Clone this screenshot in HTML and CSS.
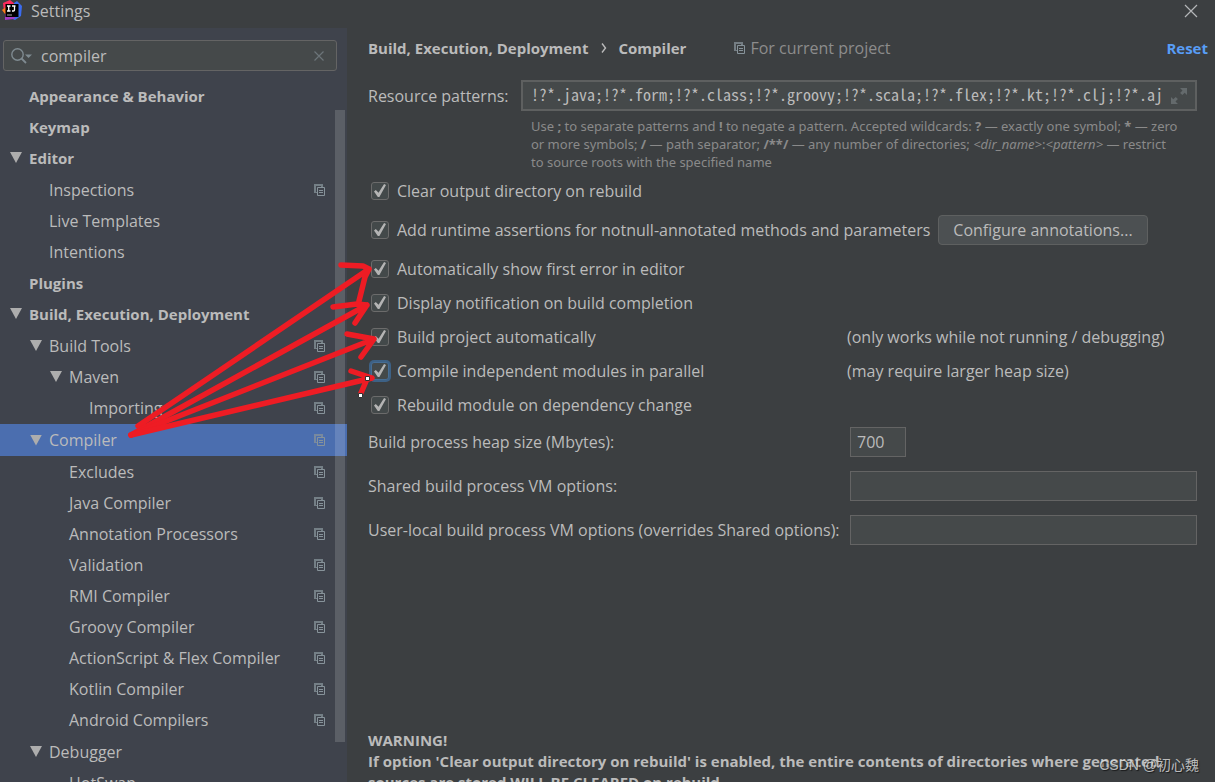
FILE: index.html
```
<!DOCTYPE html>
<html lang="en">
<head>
<meta charset="utf-8">
<title>Settings</title>
<link rel="stylesheet" href="styles.css">
</head>
<body>
<svg class="defs" aria-hidden="true">
  <symbol id="copy" viewBox="0 0 12 12">
    <path d="M0 0h9v3H7V2H2v6h1v1H0z" fill="currentColor" opacity=".75"/>
    <path d="M3.500 3.500h7v8h-7z" fill="none" stroke="currentColor"/>
    <path d="M5 6.500h4M5 8.500h4" stroke="currentColor"/>
  </symbol>
</svg>
<div class="window">
  <header class="titlebar">
    <svg class="logo" viewBox="0 0 20 20" aria-hidden="true">
      <path d="M1 3 8 0l5 4-3 9-8-1z" fill="#fc2a5c"/>
      <path d="M0 10l4-3 3 8-4-1z" fill="#f97a1c"/>
      <path d="M12 3 15 1l5 5-1 10-6 4-5-2z" fill="#3b6cf0"/>
      <path d="M3 14l6-3 5 5-2 3-9 1z" fill="#a33bc4"/>
      <path d="M3.500 4h13v13h-13z" fill="#000"/>
      <path d="M5 6h3.500M6.700 6v5M5 11h3.500M10 6h3.500M12.500 6v4q0 1-1.200 1H10" fill="none" stroke="#fff" stroke-width="1.300"/>
      <path d="M5 15h5" stroke="#aaa"/>
    </svg>
    <h1 class="title">Settings</h1>
    <button class="close" aria-label="Close"><svg width="14" height="14" viewBox="0 0 14 14"><path d="M1 1l12 12M13 1 1 13" stroke="#b4b6b8" stroke-width="1.200"/></svg></button>
  </header>
  <div class="body">
    <aside class="sidebar">
      <div class="search">
        <svg width="21" height="16" viewBox="0 0 21 16" aria-hidden="true"><circle cx="6.500" cy="6.500" r="5.700" fill="none" stroke="#7f8b91" stroke-width="1.400"/><path d="M10.500 10.500l4.500 4.500" stroke="#7f8b91" stroke-width="1.800"/><path d="M14 6.500h7l-3.500 3.500z" fill="#7f8b91"/></svg>
        <input class="search-input" type="text" value="compiler" aria-label="Search settings">
        <button class="clear" aria-label="Clear"><svg width="10" height="10" viewBox="0 0 10 10"><path d="M.5.5l9 9M9.500.5l-9 9" stroke="#6c7479" stroke-width="1.200"/></svg></button>
      </div>
      <nav class="tree">
        <ul>
          <li><a class="row top" href="#">Appearance &amp; Behavior</a></li>
          <li><a class="row top" href="#">Keymap</a></li>
          <li><a class="row top open" href="#">Editor</a>
            <ul class="group">
              <li><a class="row l2" href="#">Inspections<svg class="copy"><use href="#copy"/></svg></a></li>
              <li><a class="row l2" href="#">Live Templates</a></li>
              <li><a class="row l2" href="#">Intentions</a></li>
            </ul>
          </li>
          <li><a class="row top" href="#">Plugins</a></li>
          <li><a class="row top open" href="#">Build, Execution, Deployment</a>
            <ul class="group">
              <li><a class="row l2 open" href="#">Build Tools<svg class="copy"><use href="#copy"/></svg></a>
                <ul class="subgroup">
                  <li><a class="row l3 open" href="#">Maven<svg class="copy"><use href="#copy"/></svg></a>
                    <ul>
                      <li><a class="row l4" href="#">Importing<svg class="copy"><use href="#copy"/></svg></a></li>
                    </ul>
                  </li>
                </ul>
              </li>
              <li><a class="row l2 open selected" href="#" aria-current="page">Compiler<svg class="copy"><use href="#copy"/></svg></a>
                <ul class="subgroup">
                  <li><a class="row l3" href="#">Excludes<svg class="copy"><use href="#copy"/></svg></a></li>
                  <li><a class="row l3" href="#">Java Compiler<svg class="copy"><use href="#copy"/></svg></a></li>
                  <li><a class="row l3" href="#">Annotation Processors<svg class="copy"><use href="#copy"/></svg></a></li>
                  <li><a class="row l3" href="#">Validation<svg class="copy"><use href="#copy"/></svg></a></li>
                  <li><a class="row l3" href="#">RMI Compiler<svg class="copy"><use href="#copy"/></svg></a></li>
                  <li><a class="row l3" href="#">Groovy Compiler<svg class="copy"><use href="#copy"/></svg></a></li>
                  <li><a class="row l3" href="#">ActionScript &amp; Flex Compiler<svg class="copy"><use href="#copy"/></svg></a></li>
                  <li><a class="row l3" href="#">Kotlin Compiler<svg class="copy"><use href="#copy"/></svg></a></li>
                  <li><a class="row l3" href="#">Android Compilers<svg class="copy"><use href="#copy"/></svg></a></li>
                </ul>
              </li>
              <li><a class="row l2 open" href="#">Debugger</a>
                <ul>
                  <li><a class="row l3" href="#">HotSwap</a></li>
                </ul>
              </li>
            </ul>
          </li>
        </ul>
        <div class="scrollbar"></div>
      </nav>
    </aside>
    <main class="content">
      <div class="crumbs">
        <h2 class="crumb">Build, Execution, Deployment</h2>
        <svg class="chevron" width="6" height="10" viewBox="0 0 6 10" aria-hidden="true"><path d="M1 .5 4.500 5 1 9.500" fill="none" stroke="#bbb" stroke-width="1.400"/></svg>
        <h2 class="crumb">Compiler</h2>
        <span class="scope"><svg class="copy"><use href="#copy"/></svg>For current project</span>
        <a class="reset" href="#">Reset</a>
      </div>
      <div class="patterns">
        <label for="patterns">Resource patterns:</label>
        <div class="pattern-box">
          <input id="patterns" type="text" value="!?*.java;!?*.form;!?*.class;!?*.groovy;!?*.scala;!?*.flex;!?*.kt;!?*.clj;!?*.aj">
          <button class="expand" aria-label="Expand"><svg width="16" height="16" viewBox="0 0 16 16"><path d="M9 0h7v7l-2.300-2.300-2.400 2.400-2.200-2.200 2.400-2.400zM0 9l2.300 2.300 2.400-2.400 2.200 2.200-2.400 2.400L7 16H0z" fill="#646a6c"/></svg></button>
        </div>
        <p class="hint">Use <b>;</b> to separate patterns and <b>!</b> to negate a pattern. Accepted wildcards: <b>?</b> — exactly one symbol; <b>*</b> — zero<br>or more symbols; <b>/</b> — path separator; <b>/**/</b> — any number of directories; <i>&lt;dir_name&gt;</i>:<i>&lt;pattern&gt;</i> — restrict<br>to source roots with the specified name</p>
      </div>
      <div class="check"><label><input type="checkbox" checked>Clear output directory on rebuild</label></div>
      <div class="check tall"><label><input type="checkbox" checked>Add runtime assertions for notnull-annotated methods and parameters</label><button class="configure">Configure annotations...</button></div>
      <div class="check"><label><input type="checkbox" checked>Automatically show first error in editor</label></div>
      <div class="check"><label><input type="checkbox" checked>Display notification on build completion</label></div>
      <div class="check noted"><label><input type="checkbox" checked>Build project automatically</label><span>(only works while not running / debugging)</span></div>
      <div class="check noted"><label><input class="focused" type="checkbox" checked>Compile independent modules in parallel</label><span>(may require larger heap size)</span></div>
      <div class="check"><label><input type="checkbox" checked>Rebuild module on dependency change</label></div>
      <div class="fields">
        <label for="heap">Build process heap size (Mbytes):</label><input class="heap" id="heap" type="text" value="700">
        <label for="shared">Shared build process VM options:</label><input id="shared" type="text">
        <label for="local">User-local build process VM options (overrides Shared options):</label><input id="local" type="text">
      </div>
      <p class="warning">WARNING!<br>If option 'Clear output directory on rebuild' is enabled, the entire contents of directories where generated<br>sources are stored WILL BE CLEARED on rebuild.</p>
    </main>
  </div>
  <svg class="arrows" width="420" height="460" viewBox="0 0 420 460" aria-hidden="true">
    <g fill="none" stroke="#ee1c24" stroke-width="5.500" stroke-linecap="round" stroke-linejoin="round">
      <path d="M138 426 369 269M341 265l22 1 6 3-4 8-6 24"/>
      <path d="M131 435 367 305M333 307l24-3 10 1-12 18"/>
      <path d="M131 435 374 339M347 334l27 5-13 18"/>
      <path d="M131 435 372 378M351 371l21 7M367 379l-6 14"/>
    </g>
    <path d="M365.500 376.500h4v4h-4zM358.500 393.500h4v4h-4z" fill="#fff" stroke="#333"/>
  </svg>
  <div class="watermark">CSDN @初心魏</div>
</div>
</body>
</html>
```
FILE: styles.css
```
* { box-sizing: border-box; }
body {
  margin: 0;
  background: #3c3f41;
  color: #bbbbbb;
  font: 16px/22px "Open Sans", "Noto Sans", sans-serif;
}
h1, h2, p, ul { margin: 0; padding: 0; }
ul { list-style: none; }
a { color: inherit; text-decoration: none; }
button { padding: 0; border: 0; background: none; color: inherit; font: inherit; display: flex; align-items: center; justify-content: center; }
input { margin: 0; font: inherit; color: inherit; }
.defs { position: absolute; width: 0; height: 0; }
.window { position: relative; height: 100vh; overflow: hidden; display: flex; flex-direction: column; }
.titlebar { flex: none; height: 28px; display: flex; align-items: flex-start; padding: 0 17px 0 2px; }
.logo { width: 20px; height: 20px; }
.title { font-size: 16px; font-weight: 400; margin-left: 9px; flex: 1; }
.close { height: 22px; }
.body { flex: 1; min-height: 0; display: flex; }
.sidebar { flex: none; width: 347px; background: #3f434c; padding-top: 12px; overflow: hidden; }
.search { display: flex; align-items: center; height: 31px; margin: 0 10px 0 3px; padding: 0 12px 0 7px; background: #45494a; border: 1px solid #646464; border-radius: 3px; }
.search-input { flex: 1; min-width: 0; margin-left: 9px; padding: 0; border: 0; background: none; outline: none; }
.tree { position: relative; margin-top: 9px; }
.row { position: relative; display: flex; align-items: center; justify-content: space-between; height: 31px; padding: 0 21px 0 29px; white-space: nowrap; }
.top { font-size: 15px; font-weight: 700; }
.l2 { padding-left: 49px; }
.l3 { padding-left: 69px; }
.l4 { padding-left: 89px; }
.group { padding-top: 1px; }
.subgroup { padding-bottom: 1px; }
.selected { height: 32px; background: #4b6eaf; }
.open::before { content: ""; width: 12px; height: 11px; margin: 0 7px 0 -19px; background: #adadad; clip-path: polygon(0 0, 100% 0, 50% 100%); }
.open { justify-content: flex-start; }
.open .copy { margin-left: auto; }
.copy { width: 12px; height: 12px; color: #87939a; flex: none; }
.scrollbar { position: absolute; top: 30px; right: 2px; width: 10px; height: 632px; background: rgba(255, 255, 255, 0.15); }
.content { flex: 1; min-width: 0; padding: 9px 18px 0 21px; }
.crumbs { display: flex; align-items: center; margin-right: -12px; }
.crumb { font-size: 15px; font-weight: 700; }
.chevron { margin: 0 12px; }
.scope { display: flex; align-items: center; gap: 4px; margin-left: 48px; color: #8c8c8c; }
.reset { margin-left: auto; padding-right: 1px; color: #589df6; font-size: 15px; font-weight: 700; }
.patterns { display: grid; grid-template-columns: 153px 1fr; align-items: center; margin-top: 21px; }
.pattern-box { display: flex; height: 31px; padding: 0 8px; background: #45494a; border: 2px solid #5e6060; }
.pattern-box input { flex: 1; min-width: 0; padding: 0 0 4px; border: 0; background: none; outline: none; font: 16px "Noto Sans Mono CJK SC", "Liberation Mono", monospace; }
.expand { margin-left: 8px; }
.hint { grid-column: 2; padding: 0 0 3px 10px; margin-top: 6px; font-family: "Noto Sans", sans-serif; font-size: 13px; line-height: 18px; color: #8a8a8a; white-space: nowrap; }
.check { display: flex; align-items: center; height: 34px; }
.tall { height: 44px; }
.check label { display: flex; align-items: center; white-space: nowrap; }
.check input { appearance: none; width: 18px; height: 18px; margin: 0 8px 0 3px; background: #43494a; border: 1px solid #6b6b6b; border-radius: 3px; }
.check input:checked::before { content: ""; display: block; width: 12px; height: 13px; margin: 1px 2px; background: #b4b4b4; clip-path: polygon(0 58%, 15% 46%, 38% 68%, 84% 0, 100% 8%, 45% 100%, 32% 100%); }
.check .focused { border-color: #466d94; box-shadow: 0 0 0 2px #3d6185; }
.configure { height: 30px; padding: 0 14px; margin-left: 8px; background: #4c5052; border: 1px solid #5e6060; border-radius: 4px; }
.noted label { width: 479px; }
.fields { display: grid; grid-template-columns: 482px 1fr; row-gap: 14px; align-items: center; margin-top: 5px; }
.fields input { width: 100%; height: 30px; padding: 0 6px; background: #45494a; border: 1px solid #646464; outline: none; }
.fields .heap { width: 56px; }
.warning { margin-top: 185px; font-size: 15px; font-weight: 700; line-height: 21px; white-space: nowrap; }
.arrows { position: absolute; left: 0; top: 0; pointer-events: none; }
.watermark { position: absolute; right: 16px; bottom: 6px; font: 14px/22px "Liberation Sans", "Noto Sans CJK SC", sans-serif; color: rgba(225, 225, 225, 0.8); text-shadow: 1px 1px 1px rgba(0, 0, 0, 0.6); }
```
